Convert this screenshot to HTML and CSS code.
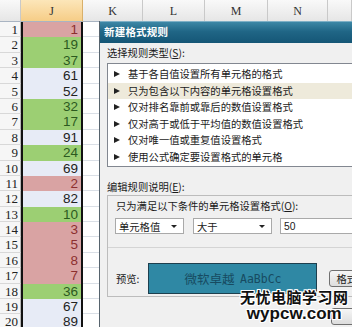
FILE: index.html
```html
<!DOCTYPE html>
<html lang="zh-CN">
<head>
    <meta charset="UTF-8">
    <title>新建格式规则</title>
    <link rel="stylesheet" href="styles.css">
</head>
<body>
    <!-- Worksheet behind the dialog -->
    <div class="sheet" id="sheet">
        <div class="hd corner"></div>
        <div class="hd hd-sel">J</div>
        <div class="hd">K</div>
        <div class="hd">L</div>
        <div class="hd">M</div>
        <div class="hd">N</div>
        <div class="hd"></div>
    </div>

    <!-- New formatting rule dialog -->
    <div class="dialog">
        <div class="titlebar">新建格式规则</div>
        <div class="dialog-body">
            <div class="label">选择规则类型(<u>S</u>):</div>
            <ul class="rule-list">
                <li>基于各自值设置所有单元格的格式</li>
                <li class="selected">只为包含以下内容的单元格设置格式</li>
                <li>仅对排名靠前或靠后的数值设置格式</li>
                <li>仅对高于或低于平均值的数值设置格式</li>
                <li>仅对唯一值或重复值设置格式</li>
                <li>使用公式确定要设置格式的单元格</li>
            </ul>

            <div class="label label-edit">编辑规则说明(<u>E</u>):</div>
            <div class="rule-box">
                <div class="rule-top">
                    <div class="label">只为满足以下条件的单元格设置格式(<u>O</u>):</div>
                    <div class="controls">
                        <div class="select select-a">单元格值<span class="caret"></span></div>
                        <div class="select select-b">大于<span class="caret"></span></div>
                        <div class="textbox">50</div>
                    </div>
                </div>
                <div class="preview-row">
                    <span class="label">预览:</span>
                    <div class="preview">微软卓越&nbsp;&nbsp;<span class="latin">AaBbCc</span></div>
                    <button class="btn">格式(F)...</button>
                </div>
            </div>
            <div class="footer">
                <button class="btn btn-ok"></button>
            </div>
        </div>
    </div>

    <!-- Site watermark -->
    <div class="watermark">
        <div class="wm-cn">无忧电脑学习网</div>
        <div class="wm-en">wypcw.com</div>
    </div>

    <script>
        // Values in column J and the fill each one got from the rule
        const values = [
            [1, 'bad'], [19, 'good'], [37, 'good'], [61, 'plain'], [52, 'plain'],
            [32, 'good'], [17, 'good'], [91, 'plain'], [24, 'good'], [69, 'plain'],
            [2, 'bad'], [82, 'plain'], [10, 'good'], [3, 'bad'], [5, 'bad'],
            [8, 'bad'], [7, 'bad'], [36, 'good'], [67, 'plain'], [89, 'plain']
        ];

        const sheet = document.getElementById('sheet');

        values.forEach(function (item, i) {
            const num = document.createElement('div');
            num.className = 'rownum';
            num.textContent = i + 1;
            sheet.appendChild(num);

            const cell = document.createElement('div');
            cell.className = 'cell cell-j ' + item[1];
            cell.textContent = item[0];
            sheet.appendChild(cell);

            // empty cells K..N and the rest
            for (let c = 0; c < 5; c++) {
                const empty = document.createElement('div');
                empty.className = 'cell';
                sheet.appendChild(empty);
            }
        });
    </script>
</body>
</html>
```

FILE: styles.css
```css
/* Page */
body {
    margin: 0;
    width: 352px;
    height: 327px;
    overflow: hidden;
    position: relative;
    background: #fff;
    font-family: "Noto Sans CJK SC", sans-serif;
}

/* Worksheet grid */
.sheet {
    display: grid;
    grid-template-columns: 21px 62px 60px 62px 63px 60px 24px;
    grid-template-rows: 22px;
    grid-auto-rows: 15.4px;
    border-top: 3px solid #f4f4f4;
    margin-top: -3px;
}

.hd {
    background: linear-gradient(#f9f9f9, #e6e6e6);
    border-right: 1px solid #c9c9c9;
    border-bottom: 1px solid #a9b4c2;
    font-family: "Liberation Serif", serif;
    font-size: 12px;
    color: #333;
    display: flex;
    align-items: center;
    justify-content: center;
    padding-top: 2px;
    box-sizing: border-box;
}

.hd-sel {
    background: linear-gradient(#fce6b9, #f6cd87);
    border-right-color: #d9b06a;
}

.rownum {
    background: #f6f6f6;
    border-right: 1px solid #b8b8b8;
    border-bottom: 1px solid #d8d8d8;
    font-family: "Liberation Serif", serif;
    font-size: 13px;
    color: #222;
    text-align: right;
    padding-right: 2px;
    line-height: 15px;
    box-sizing: border-box;
}

.cell {
    border-right: 1px solid #dadfe6;
    border-bottom: 1px solid #dadfe6;
    box-sizing: border-box;
}

.cell-j {
    border-left: 2px solid #111;
    border-right: 2px solid #111;
    border-bottom: none;
    font-family: "Liberation Sans", sans-serif;
    font-size: 13.5px;
    line-height: 16px;
    text-align: right;
    padding-right: 3px;
}

.cell-j.bad {
    background: #d9a3a3;
    color: #8c2f2f;
}

.cell-j.good {
    background: #9ccf73;
    color: #2c5a1f;
}

.cell-j.plain {
    background: #e7ebf6;
    color: #222;
}

/* Dialog window */
.dialog {
    position: absolute;
    left: 99px;
    top: 21px;
    width: 290px;
    height: 320px;
    border-left: 1px solid #56636d;
    background: #f0f0f0;
    font-size: 10.3px;
    color: #1a1a1a;
}

.titlebar {
    height: 22px;
    background: linear-gradient(#3d87a6, #206686 45%, #155676);
    border-top: 1px solid #7fb0c6;
    box-sizing: border-box;
    color: #fff;
    font-weight: bold;
    font-size: 10.5px;
    line-height: 20px;
    padding-left: 4px;
    letter-spacing: 0.2px;
}

.dialog-body {
    padding: 4px 0 0 7px;
}

.label {
    line-height: 12px;
    white-space: nowrap;
}

.label u {
    text-underline-offset: 1px;
}

.rule-list {
    list-style: none;
    margin: 4px 0 0;
    padding: 2px 0 1px;
    background: #fff;
    border: 1px solid #828790;
}

.rule-list li {
    height: 16.5px;
    line-height: 16.5px;
    padding-left: 6px;
    white-space: nowrap;
    display: flex;
    align-items: center;
}

.rule-list li::before {
    content: "";
    width: 0;
    height: 0;
    border-top: 3.5px solid transparent;
    border-bottom: 3.5px solid transparent;
    border-left: 6px solid #222;
    margin-right: 8px;
}

.rule-list li.selected {
    background: #eeeadb;
}

.label-edit {
    margin-top: 14px;
}

.rule-box {
    margin-top: 2px;
    border: 1px solid #bcbcbc;
    height: 100px;
}

.rule-top {
    padding: 4px 0 0 8px;
    height: 47px;
    border-bottom: 1px solid #d4d4d4;
}

.controls {
    display: flex;
    margin-top: 6px;
    margin-left: -1px;
}

.select,
.textbox {
    height: 16px;
    line-height: 15px;
    background: #fff;
    border: 1px solid #a9a9a9;
    box-sizing: border-box;
    padding-left: 3px;
    position: relative;
}

.select-a {
    width: 69px;
    margin-right: 9px;
}

.select-b {
    width: 79px;
    margin-right: 8px;
}

.textbox {
    flex: 1;
    font-family: "Liberation Sans", sans-serif;
}

.caret {
    position: absolute;
    right: 6px;
    top: 6px;
    border-left: 3px solid transparent;
    border-right: 3px solid transparent;
    border-top: 3px solid #222;
}

.preview-row {
    display: flex;
    align-items: center;
    padding: 15px 0 0 8px;
}

.preview {
    margin-left: 9px;
    width: 169px;
    height: 31px;
    box-sizing: border-box;
    background: #2f88a4;
    border: 1px solid #1d3f4e;
    color: #174b61;
    font-size: 12.5px;
    display: flex;
    align-items: center;
    justify-content: center;
}

.preview .latin {
    font-family: "DejaVu Sans Mono", monospace;
    font-size: 11.5px;
}

.btn {
    font-family: inherit;
    font-size: 10.3px;
    color: #1a1a1a;
    height: 17px;
    padding: 0 6px;
    border: 1px solid #707070;
    border-radius: 3px;
    background: linear-gradient(#f6f6f6, #dddddd);
    white-space: nowrap;
}

.preview-row .btn {
    margin-left: 12px;
}

.btn-ok {
    width: 60px;
}

.footer {
    padding: 11px 0 0 224px;
}

/* Watermark */
.watermark {
    position: absolute;
    left: 240px;
    top: 288px;
    text-align: center;
    color: #111;
    font-weight: bold;
    text-shadow: 1px 0 #fff, -1px 0 #fff, 0 1px #fff, 0 -1px #fff,
                 1px 1px #fff, -1px -1px #fff, 1px -1px #fff, -1px 1px #fff;
}

.wm-cn {
    font-size: 15px;
    line-height: 17px;
    letter-spacing: 0.5px;
}

.wm-en {
    font-family: "Liberation Sans", sans-serif;
    font-size: 17px;
    line-height: 17px;
}
```
